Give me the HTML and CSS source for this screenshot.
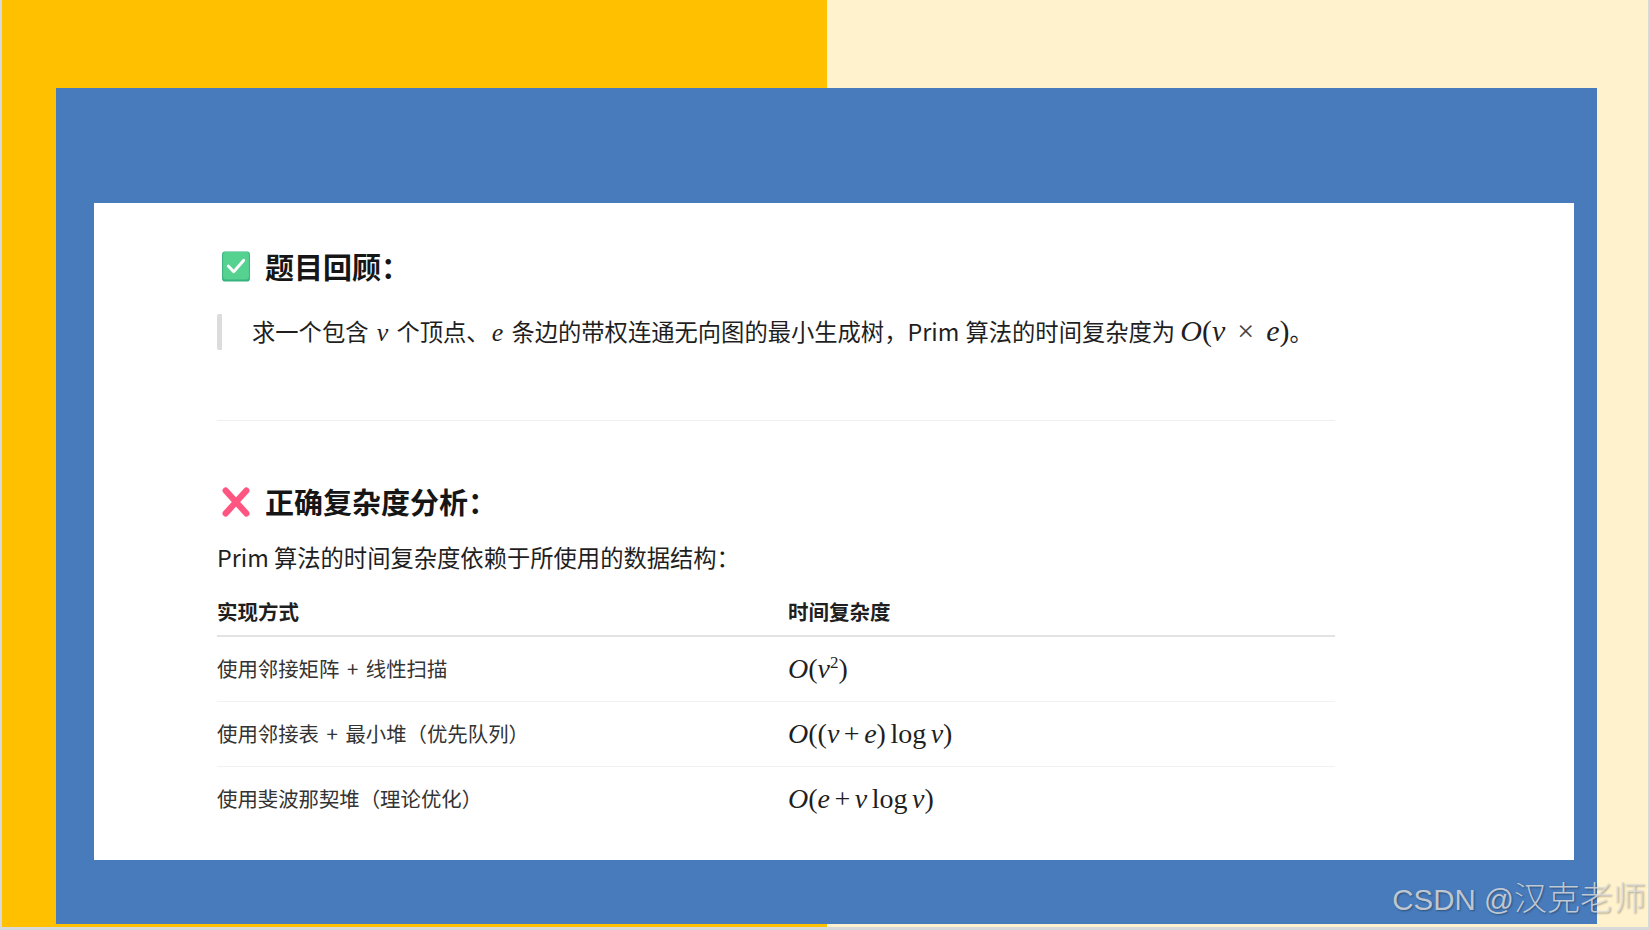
FILE: index.html
```html
<!DOCTYPE html>
<html lang="zh-CN">
<head>
<meta charset="utf-8">
<title>Prim</title>
<link rel="stylesheet" href="styles.css">
</head>
<body>
<main class="slide">
  <section class="panel">
    <article class="card">
      <h2 class="heading">
        <svg class="emoji" viewBox="0 0 28 30" aria-hidden="true"><rect x="0.5" y="0.5" width="27" height="29" rx="3" fill="#35b37e"/><rect x="1.5" y="1" width="25" height="26.5" rx="2.5" fill="#55d28f"/><path d="M6.5 14.5l5.3 5.6L21.5 9" fill="none" stroke="#fff" stroke-width="2.8" stroke-linecap="round" stroke-linejoin="round"/></svg>
        <span>题目回顾：</span>
      </h2>
      <blockquote class="quote">求一个包含 <i class="m">v</i> 个顶点、<i class="m">e</i> 条边的带权连通无向图的最小生成树，Prim 算法的时间复杂度为 <span class="math formula"><i>O</i>(<i>v</i><span class="op">×</span><i>e</i>)</span>。</blockquote>
      <hr class="rule">
      <h2 class="heading second">
        <svg class="emoji" viewBox="0 0 28 30" aria-hidden="true"><path d="M4 4.5l20 22M24 4.5L4 26.5" fill="none" stroke="#ff5580" stroke-width="6" stroke-linecap="round"/></svg>
        <span>正确复杂度分析：</span>
      </h2>
      <p class="lead">Prim 算法的时间复杂度依赖于所使用的数据结构：</p>
      <table class="table">
        <thead>
          <tr><th>实现方式</th><th>时间复杂度</th></tr>
        </thead>
        <tbody>
          <tr><td>使用邻接矩阵 + 线性扫描</td><td class="math"><i>O</i>(<i>v</i><sup>2</sup>)</td></tr>
          <tr><td>使用邻接表 + 最小堆（优先队列）</td><td class="math"><i>O</i>((<i>v</i> + <i>e</i>) log <i>v</i>)</td></tr>
          <tr><td>使用斐波那契堆（理论优化）</td><td class="math"><i>O</i>(<i>e</i> + <i>v</i> log <i>v</i>)</td></tr>
        </tbody>
      </table>
    </article>
  </section>
</main>
<div class="mark">CSDN @<span class="mark-name">汉克老师</span></div>
</body>
</html>
```
FILE: styles.css
```css
* { box-sizing: border-box; }
html, body { margin: 0; height: 100%; }
body {
  background: #d9d9d9;
  overflow: hidden;
  font-family: "Noto Sans CJK SC", "Noto Sans", sans-serif;
  color: #1f1f1f;
}
.slide {
  width: 1646px;
  height: 927px;
  margin-left: 2px;
  padding: 88px 51px 3px 54px;
  background: linear-gradient(to right, #ffc000 825px, #fff2cc 825px);
}
.panel {
  height: 836px;
  padding: 115px 23px 64px 38px;
  background: #477bbc;
}
.card {
  height: 657px;
  padding: 45px 239px 0 123px;
  background: #fff;
}
.heading {
  display: flex;
  align-items: center;
  gap: 14px;
  height: 36px;
  margin: 0;
  font-size: 29px;
  line-height: 36px;
  font-weight: 700;
  color: #161616;
}
.emoji { width: 30px; height: 31px; margin-left: 4px; flex: none; }
.second { margin-top: 62px; }
.quote {
  height: 36px;
  margin: 30px 0 0;
  padding-left: 30px;
  border-left: 5px solid #dcdcdc;
  border-radius: 2px;
  font-size: 23.3px;
  line-height: 34px;
  word-spacing: 1px;
  white-space: nowrap;
}
.m, .math i { font-family: "Liberation Serif", serif; font-style: italic; }
.m { font-size: 26px; padding: 0 2px; }
.math { font-family: "Liberation Serif", serif; font-size: 29px; }
.formula { font-size: 30px; margin-left: -1px; }
.op { margin: 0 12px; color: #444; }
.rule {
  height: 1px;
  margin: 70px 0 0;
  border: 0;
  background: #efefef;
}
.lead {
  margin: 21px 0 0;
  font-size: 23.3px;
  line-height: 34px;
}
.table {
  width: 100%;
  margin-top: 16px;
  border-collapse: collapse;
  table-layout: fixed;
}
.table th {
  height: 46px;
  padding: 0 0 4px;
  text-align: left;
  font-size: 20.5px;
  font-weight: 700;
  border-bottom: 2px solid #e3e3e3;
}
.table th:first-child, .table td:first-child { width: 571px; }
.table td {
  height: 65px;
  padding: 0 0 2px;
  font-size: 20.4px;
  color: #333;
  word-spacing: 3px;
  border-bottom: 1px solid #f1f1f1;
}
.table tr:last-child td { border-bottom: 0; }
.table td.math { padding-bottom: 0; font-size: 28px; color: #1f1f1f; word-spacing: -2.5px; }
sup { font-size: 17px; line-height: 0; }
.mark {
  position: absolute;
  right: 4px;
  top: 877px;
  font-family: "Liberation Sans", "Noto Sans CJK SC", sans-serif;
  font-size: 29.5px;
  line-height: 44px;
  white-space: nowrap;
  color: rgba(222, 222, 222, 0.82);
  text-shadow: 1px 1px 2px rgba(0, 0, 0, 0.35);
}
.mark-name { font-size: 33px; font-weight: 300; }
```
